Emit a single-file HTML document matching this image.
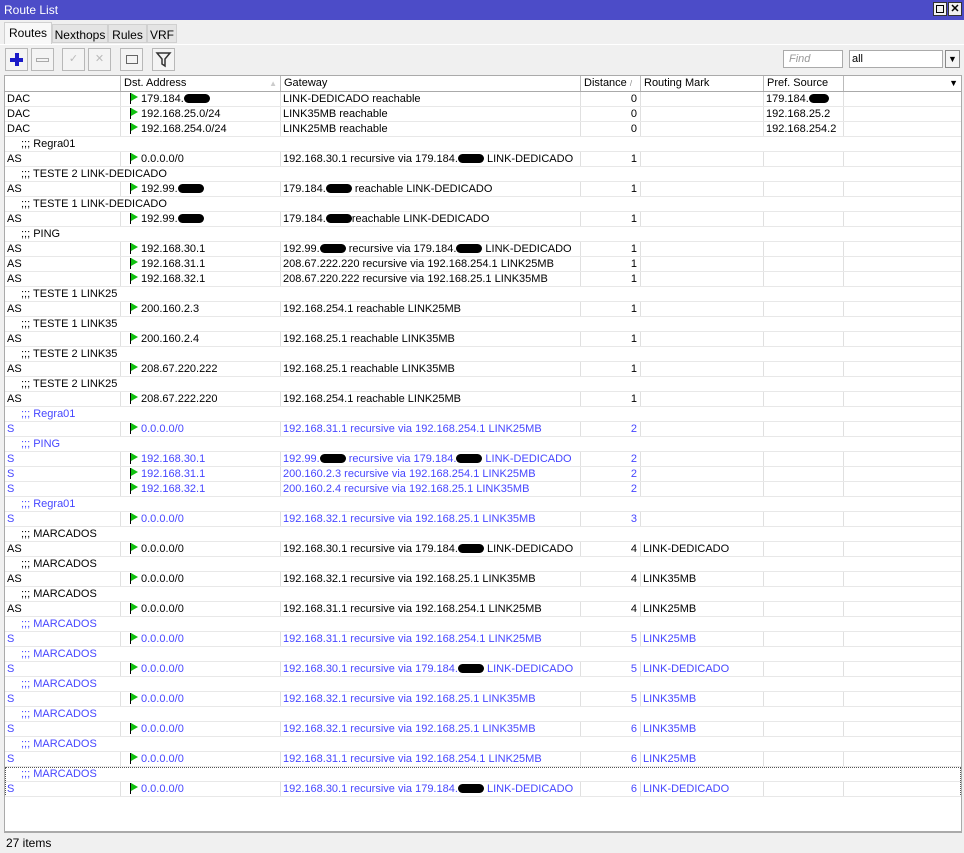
<!DOCTYPE html>
<html><head><meta charset="utf-8"><style>
*{box-sizing:border-box;margin:0;padding:0}
body{width:964px;height:853px;background:#f0f0f0;font-family:"Liberation Sans",Arial,sans-serif;font-size:11px;color:#000;position:relative;overflow:hidden}
.title{position:absolute;left:0;top:0;width:964px;height:20px;background:#4c4cc8;color:#fff;padding:3px 0 0 4px;font-size:12px}
.wb{position:absolute;top:2px;width:14px;height:14px;background:#f0f0f0;border:1px solid #333}
.tabs{position:absolute;top:22px;left:4px;height:22px;font-size:12px}
.tab{position:absolute;top:2px;height:19px;background:#e4e4e4;border:1px solid #d0d0d0;padding:3px 0 0 0;text-align:center}
.tab.act{top:0;height:22px;background:#f8f8f8;border-bottom:none;padding-top:3px}
.tb{position:absolute;top:48px;width:23px;height:23px;border:1px solid #b8b8b8;background:#f4f4f4}
.find{position:absolute;top:50px;left:783px;width:60px;height:18px;border:1px solid #aaa;background:#fff;color:#999;font-style:italic;padding:2px 0 0 5px}
.sel{position:absolute;top:50px;left:849px;width:94px;height:18px;border:1px solid #aaa;background:#fff;padding:2px 0 0 2px}
.dd{position:absolute;top:50px;left:945px;width:15px;height:18px;border:1px solid #888;background:#f4f4f4;text-align:center;font-size:9px;line-height:16px}
.grid{position:absolute;left:4px;top:75px;width:958px;height:757px;background:#fff;border:1px solid #aaa}
.row{position:absolute;left:0;height:15px;width:956px;border-bottom:1px solid #e8e8e8;white-space:nowrap}
.row span.c{position:absolute;top:0;height:14px;line-height:15px;padding-left:2px;border-right:1px solid #e0e0e0;overflow:hidden}
.h{top:0;height:16px;background:#fff;border-bottom:1px solid #aaa}
.h span.c{height:15px;line-height:15px;border-right:1px solid #bbb;padding-left:3px}
.c1{left:0;width:116px}.c2{left:116px;width:160px}.c3{left:276px;width:300px}.c4{left:576px;width:60px;text-align:right;padding-right:3px}.c5{left:636px;width:123px}.c6{left:759px;width:80px}.c7{left:839px;width:117px;border-right:none!important}
.cm{position:absolute;left:16px;top:0;line-height:15px}
.b{color:#4646ff}
.f{display:inline-block;width:8px;height:11px;border-left:1.5px solid #000;position:relative;margin:0 3px 0 7px;vertical-align:-2px}
.f:after{content:"";position:absolute;left:0;top:0;border-left:7px solid #10c010;border-top:4px solid transparent;border-bottom:4px solid transparent}
.x{display:inline-block;width:26px;height:9px;background:#000;border-radius:5px;vertical-align:-1px}
.status{position:absolute;left:4px;top:832px;width:958px;height:20px;border-top:1px solid #aaa;padding:3px 0 0 2px;font-size:12px}
</style></head><body>
<div class="title">Route List</div>
<div class="wb" style="left:933px"><div style="margin:2px;width:8px;height:8px;border:1px solid #000"></div></div>
<div class="wb" style="left:948px;font-size:11px;line-height:12px;text-align:center;font-weight:bold">✕</div>
<div class="tabs">
<div class="tab act" style="left:0;width:48px">Routes</div>
<div class="tab" style="left:48px;width:56px">Nexthops</div>
<div class="tab" style="left:104px;width:39px">Rules</div>
<div class="tab" style="left:143px;width:30px">VRF</div>
</div>
<div style="position:absolute;left:0;top:44px;width:964px;border-top:1px solid #fff"></div>
<div class="tb" style="left:5px"><div style="position:absolute;left:4px;top:9px;width:13px;height:4px;background:#1a1ac8"></div><div style="position:absolute;left:9px;top:4px;width:4px;height:13px;background:#1a1ac8"></div></div>
<div class="tb" style="left:31px"><div style="position:absolute;left:4px;top:9px;width:13px;height:4px;border:1px solid #aaa"></div></div>
<div class="tb" style="left:62px;color:#bbb;text-align:center;line-height:21px">✓</div>
<div class="tb" style="left:88px;color:#bbb;text-align:center;line-height:21px">✕</div>
<div class="tb" style="left:120px"><div style="position:absolute;left:5px;top:6px;width:12px;height:9px;border:1px solid #666"></div></div>
<div class="tb" style="left:152px"><svg width="21" height="21" style="position:absolute;left:0;top:0"><path d="M4 4h13l-5 6v7l-3-2v-5z" fill="none" stroke="#333" stroke-width="1.5"/></svg></div>
<div class="find">Find</div><div class="sel">all</div><div class="dd">▼</div>
<div class="grid">
<div class="row h"><span class="c c1"></span><span class="c c2">Dst. Address<span style="float:right;color:#ccc;font-size:8px;padding-right:3px">▲</span></span><span class="c c3">Gateway</span><span class="c c4" style="text-align:left">Distance <span style="color:#888;font-size:8px">/</span></span><span class="c c5">Routing Mark</span><span class="c c6">Pref. Source</span><span class="c c7"><span style="float:right;padding-right:3px;font-size:9px">▼</span></span></div>
<div class="row" style="top:16px"><span class="c c1">DAC</span><span class="c c2"><i class="f"></i>179.184.<i class="x"></i></span><span class="c c3">LINK-DEDICADO reachable</span><span class="c c4">0</span><span class="c c5"></span><span class="c c6">179.184.<i class="x" style="width:20px"></i></span><span class="c c7"></span></div>
<div class="row" style="top:31px"><span class="c c1">DAC</span><span class="c c2"><i class="f"></i>192.168.25.0/24</span><span class="c c3">LINK35MB reachable</span><span class="c c4">0</span><span class="c c5"></span><span class="c c6">192.168.25.2</span><span class="c c7"></span></div>
<div class="row" style="top:46px"><span class="c c1">DAC</span><span class="c c2"><i class="f"></i>192.168.254.0/24</span><span class="c c3">LINK25MB reachable</span><span class="c c4">0</span><span class="c c5"></span><span class="c c6">192.168.254.2</span><span class="c c7"></span></div>
<div class="row" style="top:61px"><span class="cm">;;; Regra01</span></div>
<div class="row" style="top:76px"><span class="c c1">AS</span><span class="c c2"><i class="f"></i>0.0.0.0/0</span><span class="c c3">192.168.30.1 recursive via 179.184.<i class="x"></i> LINK-DEDICADO</span><span class="c c4">1</span><span class="c c5"></span><span class="c c6"></span><span class="c c7"></span></div>
<div class="row" style="top:91px"><span class="cm">;;; TESTE 2 LINK-DEDICADO</span></div>
<div class="row" style="top:106px"><span class="c c1">AS</span><span class="c c2"><i class="f"></i>192.99.<i class="x"></i></span><span class="c c3">179.184.<i class="x"></i> reachable LINK-DEDICADO</span><span class="c c4">1</span><span class="c c5"></span><span class="c c6"></span><span class="c c7"></span></div>
<div class="row" style="top:121px"><span class="cm">;;; TESTE 1 LINK-DEDICADO</span></div>
<div class="row" style="top:136px"><span class="c c1">AS</span><span class="c c2"><i class="f"></i>192.99.<i class="x"></i></span><span class="c c3">179.184.<i class="x"></i>reachable LINK-DEDICADO</span><span class="c c4">1</span><span class="c c5"></span><span class="c c6"></span><span class="c c7"></span></div>
<div class="row" style="top:151px"><span class="cm">;;; PING</span></div>
<div class="row" style="top:166px"><span class="c c1">AS</span><span class="c c2"><i class="f"></i>192.168.30.1</span><span class="c c3">192.99.<i class="x"></i> recursive via 179.184.<i class="x"></i> LINK-DEDICADO</span><span class="c c4">1</span><span class="c c5"></span><span class="c c6"></span><span class="c c7"></span></div>
<div class="row" style="top:181px"><span class="c c1">AS</span><span class="c c2"><i class="f"></i>192.168.31.1</span><span class="c c3">208.67.222.220 recursive via 192.168.254.1 LINK25MB</span><span class="c c4">1</span><span class="c c5"></span><span class="c c6"></span><span class="c c7"></span></div>
<div class="row" style="top:196px"><span class="c c1">AS</span><span class="c c2"><i class="f"></i>192.168.32.1</span><span class="c c3">208.67.220.222 recursive via 192.168.25.1 LINK35MB</span><span class="c c4">1</span><span class="c c5"></span><span class="c c6"></span><span class="c c7"></span></div>
<div class="row" style="top:211px"><span class="cm">;;; TESTE 1 LINK25</span></div>
<div class="row" style="top:226px"><span class="c c1">AS</span><span class="c c2"><i class="f"></i>200.160.2.3</span><span class="c c3">192.168.254.1 reachable LINK25MB</span><span class="c c4">1</span><span class="c c5"></span><span class="c c6"></span><span class="c c7"></span></div>
<div class="row" style="top:241px"><span class="cm">;;; TESTE 1 LINK35</span></div>
<div class="row" style="top:256px"><span class="c c1">AS</span><span class="c c2"><i class="f"></i>200.160.2.4</span><span class="c c3">192.168.25.1 reachable LINK35MB</span><span class="c c4">1</span><span class="c c5"></span><span class="c c6"></span><span class="c c7"></span></div>
<div class="row" style="top:271px"><span class="cm">;;; TESTE 2 LINK35</span></div>
<div class="row" style="top:286px"><span class="c c1">AS</span><span class="c c2"><i class="f"></i>208.67.220.222</span><span class="c c3">192.168.25.1 reachable LINK35MB</span><span class="c c4">1</span><span class="c c5"></span><span class="c c6"></span><span class="c c7"></span></div>
<div class="row" style="top:301px"><span class="cm">;;; TESTE 2 LINK25</span></div>
<div class="row" style="top:316px"><span class="c c1">AS</span><span class="c c2"><i class="f"></i>208.67.222.220</span><span class="c c3">192.168.254.1 reachable LINK25MB</span><span class="c c4">1</span><span class="c c5"></span><span class="c c6"></span><span class="c c7"></span></div>
<div class="row b" style="top:331px"><span class="cm">;;; Regra01</span></div>
<div class="row b" style="top:346px"><span class="c c1">S</span><span class="c c2"><i class="f"></i>0.0.0.0/0</span><span class="c c3">192.168.31.1 recursive via 192.168.254.1 LINK25MB</span><span class="c c4">2</span><span class="c c5"></span><span class="c c6"></span><span class="c c7"></span></div>
<div class="row b" style="top:361px"><span class="cm">;;; PING</span></div>
<div class="row b" style="top:376px"><span class="c c1">S</span><span class="c c2"><i class="f"></i>192.168.30.1</span><span class="c c3">192.99.<i class="x"></i> recursive via 179.184.<i class="x"></i> LINK-DEDICADO</span><span class="c c4">2</span><span class="c c5"></span><span class="c c6"></span><span class="c c7"></span></div>
<div class="row b" style="top:391px"><span class="c c1">S</span><span class="c c2"><i class="f"></i>192.168.31.1</span><span class="c c3">200.160.2.3 recursive via 192.168.254.1 LINK25MB</span><span class="c c4">2</span><span class="c c5"></span><span class="c c6"></span><span class="c c7"></span></div>
<div class="row b" style="top:406px"><span class="c c1">S</span><span class="c c2"><i class="f"></i>192.168.32.1</span><span class="c c3">200.160.2.4 recursive via 192.168.25.1 LINK35MB</span><span class="c c4">2</span><span class="c c5"></span><span class="c c6"></span><span class="c c7"></span></div>
<div class="row b" style="top:421px"><span class="cm">;;; Regra01</span></div>
<div class="row b" style="top:436px"><span class="c c1">S</span><span class="c c2"><i class="f"></i>0.0.0.0/0</span><span class="c c3">192.168.32.1 recursive via 192.168.25.1 LINK35MB</span><span class="c c4">3</span><span class="c c5"></span><span class="c c6"></span><span class="c c7"></span></div>
<div class="row" style="top:451px"><span class="cm">;;; MARCADOS</span></div>
<div class="row" style="top:466px"><span class="c c1">AS</span><span class="c c2"><i class="f"></i>0.0.0.0/0</span><span class="c c3">192.168.30.1 recursive via 179.184.<i class="x"></i> LINK-DEDICADO</span><span class="c c4">4</span><span class="c c5">LINK-DEDICADO</span><span class="c c6"></span><span class="c c7"></span></div>
<div class="row" style="top:481px"><span class="cm">;;; MARCADOS</span></div>
<div class="row" style="top:496px"><span class="c c1">AS</span><span class="c c2"><i class="f"></i>0.0.0.0/0</span><span class="c c3">192.168.32.1 recursive via 192.168.25.1 LINK35MB</span><span class="c c4">4</span><span class="c c5">LINK35MB</span><span class="c c6"></span><span class="c c7"></span></div>
<div class="row" style="top:511px"><span class="cm">;;; MARCADOS</span></div>
<div class="row" style="top:526px"><span class="c c1">AS</span><span class="c c2"><i class="f"></i>0.0.0.0/0</span><span class="c c3">192.168.31.1 recursive via 192.168.254.1 LINK25MB</span><span class="c c4">4</span><span class="c c5">LINK25MB</span><span class="c c6"></span><span class="c c7"></span></div>
<div class="row b" style="top:541px"><span class="cm">;;; MARCADOS</span></div>
<div class="row b" style="top:556px"><span class="c c1">S</span><span class="c c2"><i class="f"></i>0.0.0.0/0</span><span class="c c3">192.168.31.1 recursive via 192.168.254.1 LINK25MB</span><span class="c c4">5</span><span class="c c5">LINK25MB</span><span class="c c6"></span><span class="c c7"></span></div>
<div class="row b" style="top:571px"><span class="cm">;;; MARCADOS</span></div>
<div class="row b" style="top:586px"><span class="c c1">S</span><span class="c c2"><i class="f"></i>0.0.0.0/0</span><span class="c c3">192.168.30.1 recursive via 179.184.<i class="x"></i> LINK-DEDICADO</span><span class="c c4">5</span><span class="c c5">LINK-DEDICADO</span><span class="c c6"></span><span class="c c7"></span></div>
<div class="row b" style="top:601px"><span class="cm">;;; MARCADOS</span></div>
<div class="row b" style="top:616px"><span class="c c1">S</span><span class="c c2"><i class="f"></i>0.0.0.0/0</span><span class="c c3">192.168.32.1 recursive via 192.168.25.1 LINK35MB</span><span class="c c4">5</span><span class="c c5">LINK35MB</span><span class="c c6"></span><span class="c c7"></span></div>
<div class="row b" style="top:631px"><span class="cm">;;; MARCADOS</span></div>
<div class="row b" style="top:646px"><span class="c c1">S</span><span class="c c2"><i class="f"></i>0.0.0.0/0</span><span class="c c3">192.168.32.1 recursive via 192.168.25.1 LINK35MB</span><span class="c c4">6</span><span class="c c5">LINK35MB</span><span class="c c6"></span><span class="c c7"></span></div>
<div class="row b" style="top:661px"><span class="cm">;;; MARCADOS</span></div>
<div class="row b" style="top:676px"><span class="c c1">S</span><span class="c c2"><i class="f"></i>0.0.0.0/0</span><span class="c c3">192.168.31.1 recursive via 192.168.254.1 LINK25MB</span><span class="c c4">6</span><span class="c c5">LINK25MB</span><span class="c c6"></span><span class="c c7"></span></div>
<div style="position:absolute;left:0;top:691px;width:956px;height:30px;border:1px dotted #555"></div>
<div class="row b" style="top:691px"><span class="cm">;;; MARCADOS</span></div>
<div class="row b" style="top:706px"><span class="c c1">S</span><span class="c c2"><i class="f"></i>0.0.0.0/0</span><span class="c c3">192.168.30.1 recursive via 179.184.<i class="x"></i> LINK-DEDICADO</span><span class="c c4">6</span><span class="c c5">LINK-DEDICADO</span><span class="c c6"></span><span class="c c7"></span></div>
</div>
<div class="status">27 items</div>
</body></html>
